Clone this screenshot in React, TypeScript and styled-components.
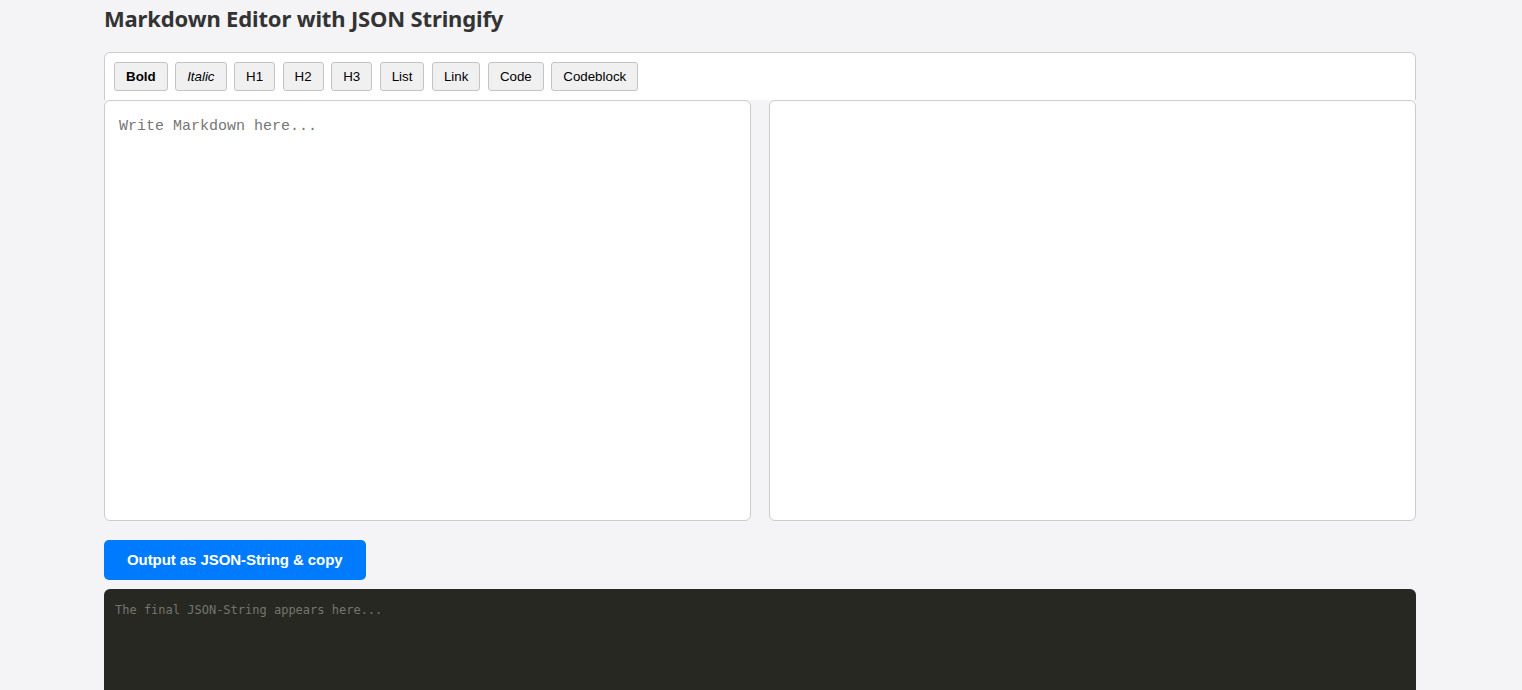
import React, { useState } from "react";
import styled, { createGlobalStyle } from "styled-components";

const GlobalStyle = createGlobalStyle`
  html, body {
    margin: 0;
    padding: 0;
    background: #f4f4f6;
  }
  body {
    font-family: "Noto Sans", "Liberation Sans", Arial, sans-serif;
    color: #333;
  }
  * { box-sizing: border-box; }
`;

const Page = styled.div`
  max-width: 1312px;
  margin: 0 auto 0 max(0px, calc((100% - 1312px) / 2 - 1px));
  padding: 3px 0 0;
`;

const Title = styled.h1`
  margin: 0 0 19px;
  font-family: "Noto Sans", "Open Sans", sans-serif;
  font-size: 22px;
  font-weight: 700;
  line-height: 30px;
  letter-spacing: -0.15px;
  color: #333;
`;

const Toolbar = styled.div`
  display: flex;
  flex-wrap: wrap;
  gap: 7.5px;
  padding: 9px;
  background: #fff;
  border: 1px solid #ccc;
  border-bottom: none;
  border-radius: 6px 6px 0 0;
`;

const ToolButton = styled.button<{ $variant?: "bold" | "italic" }>`
  font-family: "Liberation Sans", Arial, sans-serif;
  font-size: 13.33px;
  font-weight: ${(p) => (p.$variant === "bold" ? 700 : 400)};
  font-style: ${(p) => (p.$variant === "italic" ? "italic" : "normal")};
  line-height: 15px;
  color: #000;
  padding: 6px 11px;
  background: #f0f0f0;
  border: 1px solid #c4c4c4;
  border-radius: 3px;
  cursor: pointer;
`;

const Panes = styled.div`
  display: grid;
  grid-template-columns: 1fr 1fr;
  gap: 18px;
`;

const Pane = styled.div`
  height: 421px;
  background: #fff;
  border: 1px solid #ccc;
  border-radius: 6px;
  overflow: hidden;
`;

const Editor = styled.textarea`
  display: block;
  width: 100%;
  height: 100%;
  resize: none;
  border: none;
  outline: none;
  padding: 16px 14px 14px;
  font-family: "Liberation Mono", "Courier New", monospace;
  font-size: 15px;
  line-height: 20px;
  color: #222;
  background: transparent;

  &::placeholder {
    color: #767676;
  }
`;

const Preview = styled.div`
  padding: 14px;
  font-family: "Liberation Sans", Arial, sans-serif;
  font-size: 15px;
`;

const ExportButton = styled.button`
  display: block;
  margin: 19px 0 9px;
  padding: 11px 23px 12px;
  font-family: "Liberation Sans", Arial, sans-serif;
  font-size: 15px;
  font-weight: 700;
  line-height: 17px;
  letter-spacing: -0.07px;
  color: #fff;
  background: #007bff;
  border: none;
  border-radius: 5px;
  cursor: pointer;
`;

const Output = styled.pre`
  margin: 0 0 20px;
  min-height: 150px;
  padding: 13px 11px;
  background: #272822;
  border-radius: 6px;
  font-family: "DejaVu Sans Mono", monospace;
  font-size: 12px;
  line-height: 16px;
  color: #75756f;
  white-space: pre-wrap;
`;

const tools: { label: string; variant?: "bold" | "italic" }[] = [
  { label: "Bold", variant: "bold" },
  { label: "Italic", variant: "italic" },
  { label: "H1" },
  { label: "H2" },
  { label: "H3" },
  { label: "List" },
  { label: "Link" },
  { label: "Code" },
  { label: "Codeblock" },
];

export default function App() {
  const [text, setText] = useState("");
  const [json, setJson] = useState("");

  return (
    <>
      <GlobalStyle />
      <Page>
        <Title>Markdown Editor with JSON Stringify</Title>
        <Toolbar>
          {tools.map((t) => (
            <ToolButton key={t.label} $variant={t.variant}>
              {t.label}
            </ToolButton>
          ))}
        </Toolbar>
        <Panes>
          <Pane>
            <Editor
              placeholder="Write Markdown here..."
              value={text}
              onChange={(e) => setText(e.target.value)}
            />
          </Pane>
          <Pane>
            <Preview>{text}</Preview>
          </Pane>
        </Panes>
        <ExportButton onClick={() => setJson(JSON.stringify(text))}>
          Output as JSON-String &amp; copy
        </ExportButton>
        <Output>{json || "The final JSON-String appears here..."}</Output>
      </Page>
    </>
  );
}
